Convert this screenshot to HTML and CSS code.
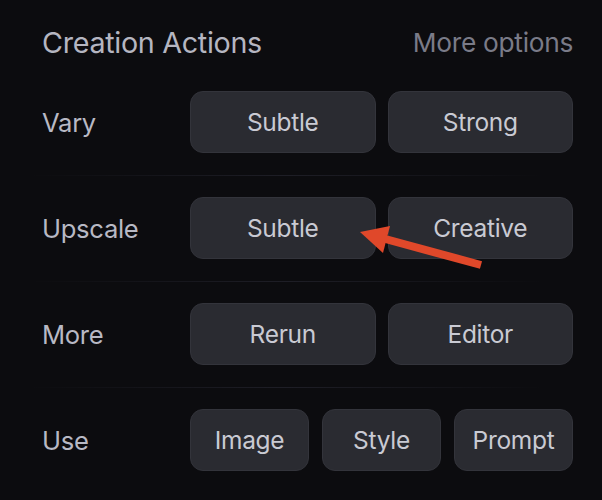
FILE: index.html
```html
<!DOCTYPE html>
<html>
<head>
<meta charset="utf-8">
<link rel="stylesheet" href="styles.css">
</head>
<body>
<div class="panel">
  <div class="header">
    <span class="title">Creation Actions</span>
    <span class="more">More options</span>
  </div>
  <div class="row">
    <span class="label">Vary</span>
    <div class="buttons">
      <button class="btn">Subtle</button>
      <button class="btn">Strong</button>
    </div>
  </div>
  <div class="divider"></div>
  <div class="row">
    <span class="label">Upscale</span>
    <div class="buttons">
      <button class="btn">Subtle</button>
      <button class="btn">Creative</button>
    </div>
  </div>
  <div class="divider"></div>
  <div class="row">
    <span class="label">More</span>
    <div class="buttons">
      <button class="btn">Rerun</button>
      <button class="btn">Editor</button>
    </div>
  </div>
  <div class="divider"></div>
  <div class="row">
    <span class="label">Use</span>
    <div class="buttons three">
      <button class="btn">Image</button>
      <button class="btn">Style</button>
      <button class="btn">Prompt</button>
    </div>
  </div>
  <svg class="arrow" width="602" height="500" viewBox="0 0 602 500">
    <line x1="481" y1="265" x2="378" y2="237" stroke="#e0482a" stroke-width="8"/>
    <polygon points="360,232 390,226 383,253" fill="#e0482a"/>
  </svg>
</div>
</body>
</html>
```

FILE: styles.css
```css
html, body {
  margin: 0;
  padding: 0;
  background: #0c0c0f;
}
body {
  width: 602px;
  height: 500px;
  overflow: hidden;
  font-family: Inter, "Noto Sans", sans-serif;
}
.panel {
  position: relative;
  height: 500px;
  padding: 14px 29px 0 0;
  box-sizing: border-box;
}
.header {
  display: flex;
  justify-content: space-between;
  align-items: center;
  height: 56px;
  padding-left: 42px;
}
.title {
  font-size: 28.7px;
  color: #b5b6c1;
  letter-spacing: -0.3px;
}
.more {
  font-size: 26.3px;
  color: #7a7b88;
  letter-spacing: -0.3px;
}
.row {
  display: flex;
  align-items: center;
  padding: 21px 0 22px 42px;
}
.label {
  width: 148px;
  font-size: 25.6px;
  color: #b8b9c4;
  letter-spacing: -0.3px;
}
.buttons {
  flex: 1;
  display: grid;
  grid-template-columns: 1fr 1fr;
  gap: 12px;
}
.buttons.three {
  grid-template-columns: 1fr 1fr 1fr;
  gap: 13px;
}
.btn {
  height: 62px;
  border-radius: 13px;
  border: 1px solid #33343b;
  background: #2a2b31;
  color: #c9cad3;
  font-family: inherit;
  font-size: 24.5px;
  letter-spacing: -0.3px;
  padding: 0;
}
.divider {
  height: 1px;
  background: linear-gradient(90deg, rgba(30,30,38,0) 5%, #1e1e26 50%, rgba(30,30,38,0) 95%);
}
.arrow {
  position: absolute;
  left: 0;
  top: 0;
  pointer-events: none;
}
```
